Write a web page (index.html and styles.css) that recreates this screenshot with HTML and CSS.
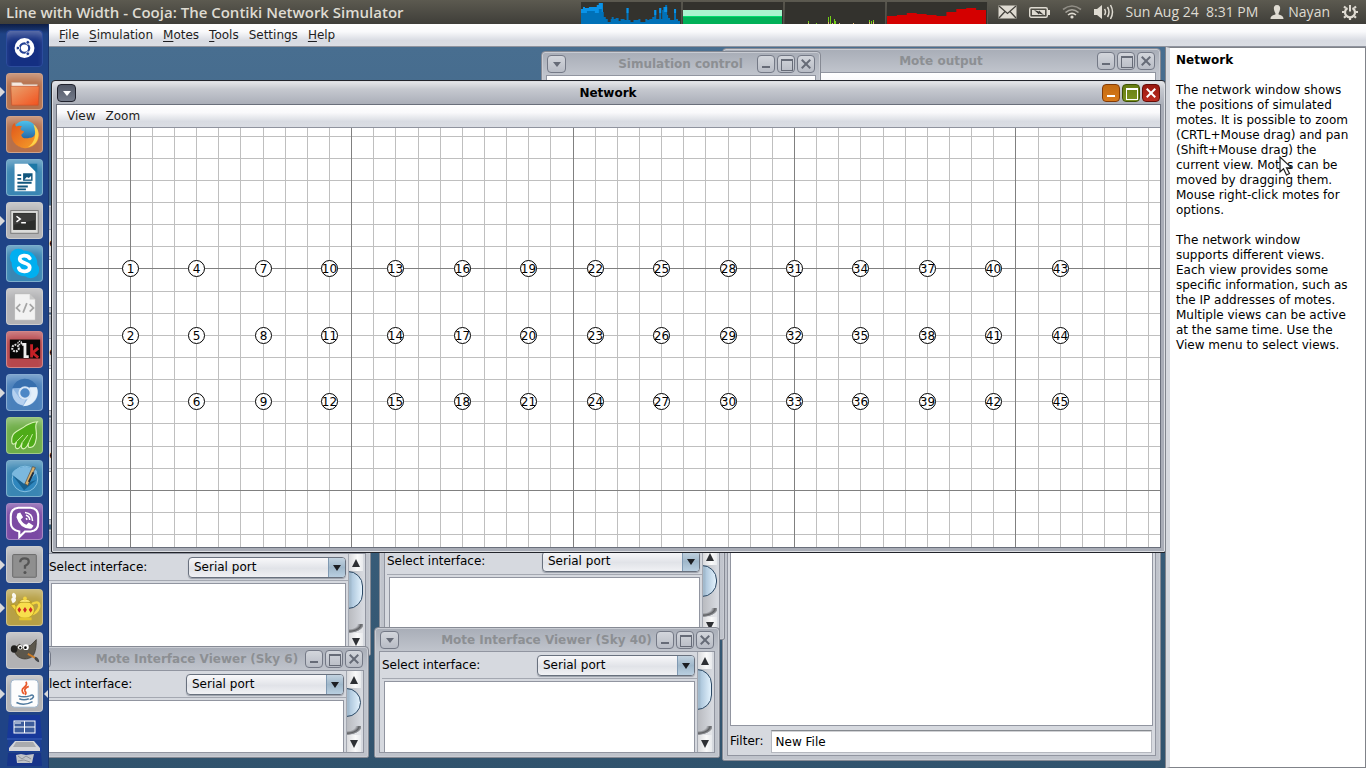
FILE: index.html
```html
<!DOCTYPE html>
<html lang="en">
<head>
<meta charset="utf-8">
<title>Line with Width - Cooja: The Contiki Network Simulator</title>
<link rel="stylesheet" href="styles.css">
</head>
<body>
<header class="panel">
  <h1 class="panel-title">Line with Width - Cooja: The Contiki Network Simulator</h1>
  <div class="monitors">
    <svg class="monitor" width="101" height="22" viewBox="0 0 101 22" aria-label="Processor"><path fill="#0071b8" d="M0 22V7H2V5H4V6H8V5H16V3H18V1H22V10H23V15H25V17H27V20H30V17H31V15H33V17H35V16H38V19H40V17H44V18H46V6H48V18H50V20H53V18H58V17H60V20H65V17H67V18H69V17H72V15H74V8H76V17H79V6H81V17H82V8H83V5H85V3H87V13H88V16H90V18H94V7H96V17H98V19H100V22Z"/><path fill="#0a93e8" d="M0 11V7H2V5H4V6H8V5H16V3H18V1H22V10H21V7H18V11H14V9H6V11ZM46 6H48V11H46ZM74 8H76V13H74ZM79 6H81V11H79ZM84 5H87V10H84ZM94 7H96V11H94Z"/></svg>
    <svg class="monitor" width="101" height="22" viewBox="0 0 101 22" aria-label="Memory"><path fill="#a9f4cf" d="M0 8H100V14H0Z"/><path fill="#00b058" d="M0 14H100V22H0Z"/><path fill="#00dc6e" d="M0 14H100V15H0Z"/></svg>
    <svg class="monitor" width="101" height="22" viewBox="0 0 101 22" shape-rendering="crispEdges" aria-label="Network traffic"><path fill="#73d216" d="M23 19H24V22H23ZM31 21H32V22H31ZM43 15H44V22H43ZM45 14H46V22H45ZM49 17H50V22H49ZM51 19H52V22H51ZM85 18H86V22H85ZM87 19H88V22H87ZM89 18H90V22H89Z"/><path fill="#e9b96e" d="M23 21H24V22H23ZM43 20H44V22H43ZM47 21H48V22H47ZM55 21H56V22H55ZM69 21H70V22H69ZM85 20H86V22H85ZM89 20H90V22H89Z"/></svg>
    <svg class="monitor" width="101" height="22" viewBox="0 0 101 22" aria-label="Load"><path fill="#d40000" d="M0 22V14H10V13H20V11H30V12H40V13H50V14H60V10H70V7H80V6H90V8H100V22Z"/></svg>
  </div>
  <div class="indicators">
    <button class="indicator" aria-label="Mail"><svg width="19" height="14" viewBox="0 0 19 14"><rect x="0.5" y="0.5" width="18" height="13" fill="#dfdbd2"/><path d="M1 1L9.500 8.500L18 1M1 13L7 6.500M18 13L12 6.500" stroke="#45433d" fill="none" stroke-width="1.300"/></svg></button>
    <button class="indicator" aria-label="Battery"><svg width="21" height="13" viewBox="0 0 21 13"><rect x="0.700" y="1.700" width="17.600" height="9.600" rx="1.500" fill="none" stroke="#dfdbd2" stroke-width="1.400"/><rect x="3" y="4" width="13" height="5" fill="#dfdbd2"/><rect x="19" y="4" width="2" height="5" fill="#dfdbd2"/><path d="M5 4L10 5.500V4.500L15 9L10 7.500V8.500Z" fill="#3c3b37"/></svg></button>
    <button class="indicator" aria-label="Wireless network"><svg width="20" height="14" viewBox="0 0 20 14" fill="none" stroke-width="1.600"><path d="M1 4.500Q10-2.500 19 4.500" stroke="#918e86"/><path d="M3.500 7.500Q10 2 16.500 7.500" stroke="#a9a69e"/><path d="M6 10Q10 6.800 14 10" stroke="#dfdbd2"/><circle cx="10" cy="12" r="1.600" fill="#dfdbd2"/></svg></button>
    <button class="indicator" aria-label="Sound"><svg width="20" height="16" viewBox="0 0 20 16" fill="none" stroke="#dfdbd2" stroke-width="1.500"><path d="M0 5H3L8 1V15L3 11H0Z" fill="#dfdbd2" stroke="none"/><path d="M10.500 5Q12.500 8 10.500 11M13.500 3Q16.500 8 13.500 13M16.500 1Q20.500 8 16.500 15"/></svg></button>
    <button class="indicator">Sun Aug 24&nbsp; 8:31 PM</button>
    <button class="indicator user"><svg width="14" height="14" viewBox="0 0 14 14"><path fill="#dfdbd2" d="M7 0C9.500 0 10.400 1.700 10.100 4C9.900 6 9 7.300 8.600 8.200V9.500C10.500 10.300 13.500 10.400 13.500 14H.5C.5 10.400 3.500 10.300 5.400 9.500V8.200C5 7.300 4.100 6 3.900 4C3.600 1.700 4.500 0 7 0Z"/></svg>Nayan</button>
    <button class="indicator" aria-label="Session"><svg width="16" height="16" viewBox="0 0 16 16" fill="none" stroke="#dfdbd2"><path d="M5.500 4A5 5 0 1 0 10.500 4" stroke-width="2.200"/><path d="M8 1V7.500" stroke-width="2"/><path d="M0 8H2M14 8H16M8 14V16M2 13.800L3.700 12.200M14 13.800L12.300 12.200M2 2.500L3.700 4M14 2.500L12.300 4" stroke-width="2.200"/></svg></button>
  </div>
</header>

<div class="workspace">
  <nav class="launcher" aria-label="Launcher">
    <button class="tile tile-dash" aria-label="Dash home"><svg viewBox="0 0 37 37"><circle cx="18.500" cy="18" r="10.500" fill="#fff"/><circle cx="18.500" cy="18" r="5" fill="none" stroke="#213f93" stroke-width="2.300"/><g fill="#213f93" stroke="#fff"><circle cx="11.500" cy="18" r="2"/><circle cx="22" cy="12" r="2"/><circle cx="22" cy="24" r="2"/></g></svg></button>
    <button class="tile tile-orange running" aria-label="Files"><svg viewBox="0 0 37 37"><path d="M5 9H15L17 11H32V14H5Z" fill="#f6e9df" stroke="#c8b1a2" stroke-width=".7"/><path d="M4 13H34L33 33H5Z" fill="url(#gFolder)" stroke="#c7512a" stroke-width=".7"/></svg></button>
    <button class="tile tile-orange" aria-label="Firefox"><svg viewBox="0 0 37 37"><circle cx="19" cy="18" r="14" fill="url(#gGlobe)"/><path d="M19 33A15 15 0 0 1 5 14C5 10 6 8 8 6C8 8 9 9 10 10C12 9 14 9 16 10C14 11 14 13 15 14L18 15C18 17 16 17 15 19C16 23 20 23 24 22C29 22 31 17 30 11C33 14 34 17 34 19C33 28 27 33 19 33Z" fill="url(#gFox)"/><path d="M28 8C32 11 34 15 33 21C32 28 27 31 22 32C29 28 32 19 28 8Z" fill="#fcd24a"/></svg></button>
    <button class="tile tile-blue" aria-label="Writer"><svg viewBox="0 0 37 37"><path d="M8 4H22L30 12V33H8Z" fill="#fff"/><path d="M22 4H32V14Z" fill="#1e78a6"/><path d="M11 16H15M11 20H15M11 24H26M11 28H22M11 31H20" stroke="#12577e" stroke-width="2"/><path d="M17 14H27V22H17Z" fill="#12577e"/><path d="M18.500 20.500L21 18L23 19L25.500 17V20.500Z" fill="#fff"/></svg></button>
    <button class="tile tile-grey running" aria-label="Terminal"><svg viewBox="0 0 37 37"><rect x="4" y="8" width="29" height="24" fill="#dcdcda" stroke="#767676"/><rect x="6.500" y="10.500" width="24" height="18" fill="#2c2d2b"/><path d="M7 11H30V18L7 23Z" fill="#444" opacity=".7"/><path d="M10 14L14 17L10 20M15 21H20" fill="none" stroke="#fff" stroke-width="1.600"/></svg></button>
    <button class="tile tile-blue" aria-label="Skype"><svg viewBox="0 0 37 37"><circle cx="12" cy="12" r="9" fill="#00aff0"/><circle cx="25" cy="25" r="9" fill="#00aff0"/><circle cx="18.500" cy="18.500" r="13.500" fill="#00aff0"/><path d="M24 13C22 9 13 9 13.500 14C14 19 24 17 24 22.500C24 28 14 28 12.500 23.500" fill="none" stroke="#fff" stroke-width="4" stroke-linecap="round"/></svg></button>
    <button class="tile tile-grey" aria-label="Source editor"><svg viewBox="0 0 37 37"><path d="M8 5H24L30 11V33H8Z" fill="#f2f2f2" stroke="#aaa" stroke-width=".6"/><path d="M24 5V11H30Z" fill="#c9c9c9"/><path d="M14 16L10 20L14 24M24 16L28 20L24 24M21 15L17 25" fill="none" stroke="#a5a5a5" stroke-width="1.800"/></svg></button>
    <button class="tile tile-red" aria-label="Luckybackup"><svg viewBox="0 0 37 37"><rect x="3" y="8" width="32" height="20" fill="#060606"/><circle cx="9" cy="17" r="3.500" fill="none" stroke="#ddd" stroke-width="2.200" stroke-dasharray="2 1"/><circle cx="13.500" cy="11.500" r="1.800" fill="none" stroke="#ddd" stroke-width="1.500" stroke-dasharray="1.500 .7"/><path d="M16 13H19V26H23" fill="none" stroke="#eee" stroke-width="3"/><path d="M26 13V27M33 17L27 22L33 27" fill="none" stroke="#c62026" stroke-width="3"/></svg></button>
    <button class="tile tile-sky running" aria-label="Chromium"><svg viewBox="0 0 37 37"><circle cx="19" cy="19" r="13.500" fill="#8fb6e2"/><path d="M5.500 14A14 14 0 0 1 32 13Z" fill="#376fae"/><path d="M17 33L24 22L24 13H31.500C35 22 28 33 17 33Z" fill="#e3effa"/><path d="M6 14L13 24Q16 27 20 25L17 32C9 31 4 23 6 14Z" fill="#b5d0ef"/><circle cx="19" cy="19" r="6" fill="#4c87c6" stroke="#d5e5f6" stroke-width="2"/></svg></button>
    <button class="tile tile-green" aria-label="Midori"><svg viewBox="0 0 37 37"><path d="M32 4C29 7 31 11 31 16C32 24 29 31 25 31C22 32 22 29 23 26C21 31 18 34 16 32C14 31 16 28 16 26C14 32 11 34 9 31C8 29 10 27 10 25C8 29 5 28 5 25C4 14 14 13 20 8C24 6 27 4 32 4Z" fill="#4eab18" stroke="#d9f3b8" stroke-width="1.200"/><path d="M10 25L17 18M16 26L22 18M23 26L27 17" stroke="#d0efab" fill="none"/></svg></button>
    <button class="tile tile-blue" aria-label="Scribes"><svg viewBox="0 0 37 37"><circle cx="19" cy="19" r="13.500" fill="#2f86bd" stroke="#8ac3e3"/><path d="M5 14L18 26L32 12C31 5 8 3 5 14Z" fill="#7bb8de"/><path d="M6 15L18 24L31 20L18 31Z" fill="#17608f"/><path d="M19 24L27 6L30 7L22 26Z" fill="#d8b06d" stroke="#4f463b" stroke-width=".7"/><path d="M23 22L28 12" stroke="#1e2c3b" stroke-width="2"/></svg></button>
    <button class="tile tile-purple" aria-label="Viber"><svg viewBox="0 0 37 37"><path d="M12 4H25Q33 5 33 13V20Q33 28 25 29H19L13 35V29Q4 27 4 20V13Q4 5 12 4Z" fill="#7d4ba3" stroke="#fff" stroke-width="2.200"/><path d="M11 10L14 9L17 14L14.500 16.500Q17 21 20.500 22L23 19.500L28 23L26 26Q14 27 10 14Z" fill="#fff"/><path d="M19 9Q27 10 27 18M20 12Q24 13 24 17M20 15L21.500 16.500" fill="none" stroke="#fff" stroke-width="1.600"/></svg></button>
    <button class="tile tile-grey running" aria-label="Unknown application"><svg viewBox="0 0 37 37"><rect x="6" y="8" width="25" height="24" rx="1" fill="#8f8f8f" stroke="#696969"/><path d="M14 16Q14 12 18.500 12Q23 12 23 15.500Q23 18 19 20V23" fill="none" stroke="#555" stroke-width="2.400"/><circle cx="19" cy="27" r="1.600" fill="#555"/></svg></button>
    <button class="tile tile-gold running" aria-label="Teapot"><svg viewBox="0 0 37 37"><path d="M26 15Q35 10 34 18Q32 25 25 26" fill="none" stroke="#f3d541" stroke-width="2.600"/><path d="M4 16L8 15L12 21V26Z" fill="#f3d541" stroke="#a98b16" stroke-width=".6"/><ellipse cx="19" cy="21" rx="10" ry="9" fill="#f8df4c" stroke="#a98b16" stroke-width=".7"/><path d="M12 13Q19 6 26 13Z" fill="#ffeb78" stroke="#a98b16" stroke-width=".7"/><circle cx="19" cy="9" r="2" fill="#f3d541"/><path d="M13 18L15 21L13 24L11 21ZM19 18L21 21L19 24L17 21ZM25 18L27 21L25 24L23 21Z" fill="#cf2b23"/><path d="M6 14Q3 9 6 8Q4 4 7 3Q11 5 9 9Q11 12 6 14Z" fill="#fff" opacity=".9"/><path d="M13 29H26V32H13Z" fill="#e5c52e"/></svg></button>
    <button class="tile tile-grey" aria-label="GIMP"><svg viewBox="0 0 37 37"><path d="M7 17L13 12L18 15L25 13L31 7C31 15 30 24 25 26C19 29 12 27 9 22Z" fill="#5c574c" stroke="#302d27" stroke-width=".7"/><ellipse cx="7.500" cy="17" rx="3.500" ry="4" fill="#201f1d"/><circle cx="14" cy="15" r="2.400" fill="#fff"/><circle cx="20" cy="15" r="3" fill="#fff"/><circle cx="14" cy="15.500" r="1.200"/><circle cx="19.500" cy="15.500" r="1.400"/><path d="M22 22L31 27" stroke="#cf7d26" stroke-width="2"/><path d="M30 25Q34 26 34 31Q30 30 29 27Z" fill="#44474a"/></svg></button>
    <button class="tile tile-grey running active" aria-label="Cooja"><svg viewBox="0 0 37 37"><rect x="4" y="4" width="29" height="29" rx="4" fill="#fdfdfd" stroke="#9db4cb"/><path d="M20 6Q22 9 18 12Q14 15 18 19M23 11Q18 13 19 16Q21 18 19 20" fill="none" stroke="#e8592b" stroke-width="1.800"/><path d="M12 21Q18 23 24 21M13 24Q18 26 23 24M10 28Q18 32 27 27M24 21Q28 19 28 22Q27 24 24 25" fill="none" stroke="#4f7a9f" stroke-width="1.600"/></svg></button>
    <button class="fold fold-switch" aria-label="Workspace switcher"><svg viewBox="0 0 37 25"><path d="M3 0H34L36 25H1Z" fill="#17389a"/><path d="M1 24H36" stroke="#3c62b8"/><rect x="8" y="6" width="21" height="12" fill="#3d5c9b" stroke="#fff"/><path d="M18.500 6V18M8 12H29M9 8H15" stroke="#fff" fill="none"/></svg></button>
    <button class="fold" aria-label="Volume"><svg viewBox="0 0 37 13"><path d="M2 0H35L36 12H1Z" fill="#1c3f93"/><path d="M9 1H28L34 8V11H3V8Z" fill="#d5d6d8"/><path d="M10 2H27L30 7H7Z" fill="#a9abae"/></svg></button>
    <button class="fold" aria-label="Trash"><svg viewBox="0 0 37 13"><path d="M2 0H35L36 13H1Z" fill="#17348a"/><path d="M10 2L15 1L20 2L28 1L26 10H11Z" fill="#c0c3c8"/><path d="M12 3L16 6L20 3L25 6M12 8L18 7L24 9" stroke="#8f939a" fill="none"/></svg></button>
  </nav>

  <main class="app">
    <nav class="menubar" aria-label="Application menu">
      <button class="menu"><u>F</u>ile</button>
      <button class="menu"><u>S</u>imulation</button>
      <button class="menu"><u>M</u>otes</button>
      <button class="menu"><u>T</u>ools</button>
      <button class="menu">Settings</button>
      <button class="menu"><u>H</u>elp</button>
    </nav>
    <div class="split">
      <div class="desktop">
        <section class="frame viewer at-edge-1"><div class="titlebar"></div><div class="pane"><div class="viewer-main"><div class="field"><span>Select interface:</span></div><div class="output"></div></div></div></section>
        <section class="frame viewer at-edge-2"><div class="titlebar"></div><div class="pane"><div class="viewer-main"><div class="field"><span>Select interface:</span></div><div class="output"></div></div></div></section>
        <section class="frame viewer at-edge-3"><div class="titlebar"></div><div class="pane"><div class="viewer-main"><div class="field"><span>Select interface:</span></div><div class="output"></div></div></div></section>

        <section class="frame mote-output">
          <div class="titlebar"><span></span><h2>Mote output</h2><div class="controls"><button class="ctl min" aria-label="Minimize"></button><button class="ctl max" aria-label="Maximize"></button><button class="ctl close" aria-label="Close"></button></div></div>
          <div class="pane log">
            <div class="inner-menubar"></div>
            <div class="log-lines"></div>
            <div class="filter"><label for="filter">Filter:</label><input id="filter" type="text" value="New File"></div>
          </div>
        </section>

        <section class="frame sim-control">
          <div class="titlebar"><button class="ctl roll" aria-label="Window menu"></button><h2>Simulation control</h2><div class="controls"><button class="ctl min" aria-label="Minimize"></button><button class="ctl max" aria-label="Maximize"></button><button class="ctl close" aria-label="Close"></button></div></div>
          <div class="pane"><div class="inner-menubar"></div></div>
        </section>

        <section class="frame viewer at-left-back">
          <div class="titlebar"></div>
          <div class="pane">
            <div class="viewer-main">
              <div class="field"><label for="if1">Select interface:</label><span class="combo"><select id="if1"><option>Serial port</option></select></span></div>
              <div class="output"></div>
            </div>
            <div class="scroll"><button class="up" aria-label="Scroll up"></button><div class="track"><div class="thumb"></div></div><button class="down" aria-label="Scroll down"></button></div>
          </div>
        </section>
        <section class="frame viewer at-mid-back">
          <div class="titlebar"></div>
          <div class="pane">
            <div class="viewer-main">
              <div class="field"><label for="if2">Select interface:</label><span class="combo"><select id="if2"><option>Serial port</option></select></span></div>
              <div class="output"></div>
            </div>
            <div class="scroll"><button class="up" aria-label="Scroll up"></button><div class="track"><div class="thumb"></div></div><button class="down" aria-label="Scroll down"></button></div>
          </div>
        </section>
        <section class="frame viewer at-left">
          <div class="titlebar"><button class="ctl roll" aria-label="Window menu"></button><h2>Mote Interface Viewer (Sky 6)</h2><div class="controls"><button class="ctl min" aria-label="Minimize"></button><button class="ctl max" aria-label="Maximize"></button><button class="ctl close" aria-label="Close"></button></div></div>
          <div class="pane">
            <div class="viewer-main">
              <div class="field"><label for="if3">Select interface:</label><span class="combo"><select id="if3"><option>Serial port</option></select></span></div>
              <div class="output"></div>
            </div>
            <div class="scroll"><button class="up" aria-label="Scroll up"></button><div class="track"><div class="thumb"></div></div><button class="down" aria-label="Scroll down"></button></div>
          </div>
        </section>
        <section class="frame viewer at-mid">
          <div class="titlebar"><button class="ctl roll" aria-label="Window menu"></button><h2>Mote Interface Viewer (Sky 40)</h2><div class="controls"><button class="ctl min" aria-label="Minimize"></button><button class="ctl max" aria-label="Maximize"></button><button class="ctl close" aria-label="Close"></button></div></div>
          <div class="pane">
            <div class="viewer-main">
              <div class="field"><label for="if4">Select interface:</label><span class="combo"><select id="if4"><option>Serial port</option></select></span></div>
              <div class="output"></div>
            </div>
            <div class="scroll"><button class="up" aria-label="Scroll up"></button><div class="track"><div class="thumb"></div></div><button class="down" aria-label="Scroll down"></button></div>
          </div>
        </section>

        <section class="frame network focused">
          <div class="titlebar"><button class="ctl roll" aria-label="Window menu"></button><h2>Network</h2><div class="controls"><button class="ctl min" aria-label="Minimize"></button><button class="ctl max" aria-label="Maximize"></button><button class="ctl close" aria-label="Close"></button></div></div>
          <div class="pane network-pane">
            <div class="inner-menubar"><button class="menu">View</button><button class="menu">Zoom</button></div>
            <svg class="plot" id="plot" role="img" aria-label="Mote positions"></svg>
          </div>
        </section>
      </div>

      <aside class="help">
        <h2>Network</h2>
        <p>The network window shows the positions of simulated motes. It is possible to zoom (CRTL+Mouse drag) and pan (Shift+Mouse drag) the current view. Motes can be moved by dragging them. Mouse right-click motes for options.</p>
        <p>The network window supports different views. Each view provides some specific information, such as the IP addresses of motes. Multiple views can be active at the same time. Use the View menu to select views.</p>
        <svg class="pointer" width="14" height="20" viewBox="0 0 14 20"><path d="M1 1V16L4.500 12.800L7.500 19L10.500 17.500L7.500 11.800H12.500Z" fill="#fff" stroke="#222" stroke-width="1.200"/></svg>
      </aside>
    </div>
  </main>
</div>

<svg class="defs" width="0" height="0" aria-hidden="true">
  <defs>
    <linearGradient id="gFolder" x1="0" y1="0" x2="1" y2="1"><stop offset="0" stop-color="#e9a36f"/><stop offset="1" stop-color="#f2511d"/></linearGradient>
    <linearGradient id="gGlobe" x1="0" y1="0" x2="0" y2="1"><stop offset="0" stop-color="#4cc1ec"/><stop offset="1" stop-color="#123b85"/></linearGradient>
    <linearGradient id="gFox" x1="0" y1="0" x2="1" y2="1"><stop offset="0" stop-color="#e0561c"/><stop offset="1" stop-color="#f6a32a"/></linearGradient>
  </defs>
</svg>
<script src="plot.js"></script>
</body>
</html>
```
FILE: styles.css
```css
* { box-sizing: border-box; }
body {
  margin: 0;
  height: 100vh;
  display: flex;
  flex-direction: column;
  overflow: hidden;
  font: 12px/15px "DejaVu Sans", sans-serif;
  color: #000;
}
h1, h2, p { margin: 0; font-size: inherit; }
button, input, select { font: inherit; color: inherit; margin: 0; padding: 0; border: 0; background: none; }
.defs { position: absolute; }

/* top panel */
.panel {
  flex: none;
  height: 24px;
  display: flex;
  align-items: center;
  padding: 0 8px 0 6px;
  background: linear-gradient(#5c5a50, #3f3e39);
  color: #dfdbd2;
  font: 14px/24px "Open Sans", sans-serif;
}
.panel-title { font-size: 15px; font-weight: 600; flex: 1; white-space: nowrap; }
.monitors { display: flex; gap: 1px; align-self: stretch; align-items: flex-end; }
.monitor { background: #33322d; border-right: 1px solid #55534b; height: 22px; }
.indicators { display: flex; align-items: center; gap: 12px; margin-left: 10px; }
.indicator { display: flex; align-items: center; white-space: nowrap; }
.user { gap: 4px; }

.workspace { flex: 1; display: flex; min-height: 0; }

/* launcher */
.launcher {
  flex: none;
  width: 49px;
  display: flex;
  flex-direction: column;
  align-items: center;
  gap: 6px;
  padding: 6px 0 0 1px;
  overflow: hidden;
  background: linear-gradient(#0d1d45, #1f4386 10px, #1f4386);
  border-right: 1px solid #19356d;
}
.tile {
  flex: none;
  position: relative;
  width: 37px;
  height: 37px;
  border-radius: 4px;
  border: 1px solid rgba(255, 255, 255, .35);
  box-shadow: inset 0 8px 8px -4px rgba(255, 255, 255, .35);
}
.tile svg { display: block; width: 35px; height: 35px; }
.tile-dash { background: #142f82; border-color: #2c4c9c; }
.tile-orange { background: #b6704b; }
.tile-blue { background: #3a86b3; }
.tile-grey { background: #b2b2b4; }
.tile-red { background: #b7474c; }
.tile-sky { background: #4a80bb; }
.tile-green { background: #6fae48; }
.tile-purple { background: #7a49a3; }
.tile-gold { background: #b7a045; }
.running::before {
  content: "";
  position: absolute;
  left: -7px;
  top: 13px;
  border: 5px solid transparent;
  border-left-color: #d8d8da;
  border-right-width: 0;
}
.active::after {
  content: "";
  position: absolute;
  right: -7px;
  top: 13px;
  border: 5px solid transparent;
  border-right-color: #d8d8da;
  border-left-width: 0;
}
.fold { flex: none; width: 37px; height: 13px; margin-top: -6px; }
.fold svg { display: block; width: 37px; }
.fold-switch { height: 25px; margin-top: -3px; }

/* application */
.app { flex: 1; min-width: 0; display: flex; flex-direction: column; }
.menubar, .inner-menubar {
  flex: none;
  display: flex;
  align-items: center;
  gap: 10px;
  padding: 0 10px;
  height: 23px;
  border-bottom: 1px solid #8f939e;
  background: linear-gradient(#fff, #f9f9fb 35%, #d8dbe2 75%, #dadde3);
  color: #1e1e22;
}
.menu { line-height: 15px; }
.menu u { text-underline-offset: 2px; }
.split { flex: 1; min-height: 0; display: flex; }
.desktop {
  flex: 1;
  position: relative;
  overflow: hidden;
  background: linear-gradient(#486e90, #3c617f 50%, #31536d);
}
.help {
  position: relative;
  flex: none;
  width: 200px;
  padding: 5px 14px 0 6px;
  background: #fff;
  border: 1px solid #808389;
  border-left: 4px solid #d6d9df;
  box-shadow: -1px 0 #80848c;
}
.help p { margin-top: 15px; }
.pointer { position: absolute; left: 109px; top: 108px; }

/* internal frames */
.frame {
  position: absolute;
  display: flex;
  flex-direction: column;
  padding: 0 4px 4px;
  border: 1px solid #868a94;
  border-radius: 4px 4px 2px 2px;
  background: linear-gradient(#a8adb7, #c1c5cd 24px, #bfc3cb);
  box-shadow: inset 0 0 0 1px #c9ccd3;
}
.titlebar {
  flex: none;
  height: 23px;
  padding: 1px 1px 0 0;
  display: grid;
  grid-template-columns: minmax(0, 1fr) auto minmax(0, 1fr);
  align-items: center;
  color: #8c8f93;
  white-space: nowrap;
}
.titlebar h2 { font-weight: 700; }
.controls { display: flex; gap: 2px; justify-content: flex-end; }
.ctl {
  position: relative;
  width: 18px;
  height: 18px;
  border: 1px solid #747986;
  border-radius: 4px;
  background: linear-gradient(#d3d6dc, #b8bcc5);
  color: #666b77;
}
.ctl::before, .ctl::after { content: ""; position: absolute; }
.roll { margin-left: 1px; width: 19px; }
.roll::before { left: 5px; top: 6px; border: 4px solid transparent; border-top: 5px solid currentColor; border-bottom: 0; }
.min::before { left: 4px; top: 10px; width: 8px; height: 2px; background: currentColor; }
.max::before { left: 3px; top: 3px; width: 10px; height: 9px; border: 1px solid currentColor; border-top-width: 2px; }
.close::before, .close::after { left: 2px; top: 7px; width: 12px; height: 2px; background: currentColor; transform: rotate(45deg); }
.close::after { transform: rotate(-45deg); }

.pane { flex: 1; min-height: 0; display: flex; border: 1px solid #9195a0; background: #d6d9df; }
.focused { border-color: #22242b; background: linear-gradient(#e8e9ec, #c6c9d0 8px, #a9adb7 24px, #a9adb7); box-shadow: inset 0 0 0 1px #dcdee2; }
.focused .titlebar { color: #000; }
.focused .pane { border-color: #6a6f7b; }
.focused .ctl { color: #fff; }
.focused .roll { background: linear-gradient(#535968, #747b8a); border-color: #20222d; }
.focused .min { background: linear-gradient(#c36a10, #d97a1a); border-color: #843b05; }
.focused .max { background: linear-gradient(#657c12, #7b9220); border-color: #3f5205; }
.focused .close { background: linear-gradient(#98180f, #bd2c20); border-color: #690c08; }

.viewer { width: 346px; }
.viewer-main { flex: 1; display: flex; flex-direction: column; padding-left: 2px; }
.field { flex: none; height: 27px; display: flex; align-items: center; justify-content: space-between; padding: 0 2px 0 0; border-bottom: 1px solid #a4a8b1; }
.output { flex: 1; margin: 2px 2px 0 2px; background: #fff; border: 1px solid #9195a0; border-bottom: 0; }
.combo { position: relative; display: block; width: 158px; height: 21px; }
.combo select {
  appearance: none;
  width: 100%;
  height: 100%;
  padding: 0 22px 0 5px;
  border: 1px solid #69717e;
  border-radius: 4px;
  background: linear-gradient(#f8f8fa, #e1e3e8 55%, #f0f1f4);
  box-shadow: 0 1px 1px #9a9fa9;
}
.combo::after {
  content: "";
  position: absolute;
  top: 1px;
  right: 1px;
  bottom: 1px;
  width: 16px;
  border-left: 1px solid #7f99b2;
  border-radius: 0 3px 3px 0;
  background: linear-gradient(#c3d3e0, #9fb7ca 50%, #b9cfe0);
  pointer-events: none;
}
.combo::before {
  content: "";
  position: absolute;
  z-index: 1;
  right: 5px;
  top: 8px;
  border: 4px solid transparent;
  border-top: 6px solid #1c1e22;
  border-bottom: 0;
  pointer-events: none;
}
.scroll { flex: none; width: 17px; padding-right: 2px; display: flex; flex-direction: column; border-left: 1px solid #a4a8b1; }
.up, .down { position: relative; flex: none; height: 17px; background: linear-gradient(90deg, #d9dadd, #fafafa 60%, #e8eaed); }
.up::before, .down::before { content: ""; position: absolute; left: 3px; top: 5px; border: 4px solid transparent; }
.up::before { border-bottom: 8px solid #2e3034; border-top: 0; }
.down::before { border-top: 8px solid #2e3034; border-bottom: 0; }
.track { flex: 1; position: relative; overflow: hidden; background: linear-gradient(90deg, #b9bbc0, #d6d9df); }
.track::after { content: ""; position: absolute; left: 0; right: 0; bottom: 0; height: 9px; background: radial-gradient(ellipse 15px 9px at 0 0, transparent 55%, #4a4b4e 80%, #8d8f93 95%, #e6e7ea 100%); opacity: .85; }
.thumb {
  position: absolute;
  left: -16px;
  right: 0;
  top: 0;
  height: 62%;
  border: 1px solid #2b4864;
  border-radius: 15px;
  background: linear-gradient(90deg, #a2bacd 60%, #b0c9de 65%, #e3f2fd);
}

.log { flex-direction: column; padding: 0 2px 2px 2px; }
.log .inner-menubar { margin: 0 -2px; }
.log-lines { flex: 1; background: #fff; border: 1px solid #9195a0; }
.filter { flex: none; display: flex; align-items: center; gap: 7px; padding: 4px 1px 0 0; }
.filter input { flex: 1; min-width: 0; height: 23px; padding: 0 4px; background: #fff; border: 1px solid #b5b8bf; border-top-color: #85898f; box-shadow: inset 0 1px #d0d1d4; }
.sim-control .inner-menubar { flex: 1; }

.network-pane { flex-direction: column; }
.plot { flex: 1; min-height: 0; width: 100%; background: #fff; display: block; }
.plot text { font: 12px "DejaVu Sans", sans-serif; text-anchor: middle; }
.plot circle { fill: #fff; stroke: #000; }
.plot .minor { stroke: #bfbfbf; }
.plot .major { stroke: #808080; }

/* window places on the desktop */
.network { left: 2px; top: 33px; width: 1115px; height: 473px; }
.mote-output { left: 673px; top: 1px; width: 439px; height: 713px; }
.sim-control { left: 492px; top: 4px; width: 280px; height: 120px; }
.at-left-back { left: -8px; top: 482px; width: 330px; height: 127px; }
.at-mid-back { left: 330px; top: 476px; height: 117px; }
.at-left { left: -23px; top: 599px; width: 343px; height: 112px; }
.at-mid { left: 325px; top: 580px; height: 131px; }
.at-edge-1 { left: -26px; top: 158px; height: 108px; }
.at-edge-2 { left: -26px; top: 267px; height: 102px; }
.at-edge-3 { left: -26px; top: 370px; height: 108px; }
```
FILE: plot.js
```js
const svg = document.getElementById("plot");
const NS = "http://www.w3.org/2000/svg";
const step = 22.143;
const origin = { x: 73, y: 140 };

function add(tag, attrs, text) {
  const el = document.createElementNS(NS, tag);
  for (const key in attrs) el.setAttribute(key, attrs[key]);
  if (text !== undefined) el.textContent = text;
  svg.appendChild(el);
}

// background grid: every tenth line is darker
["minor", "major"].forEach(kind => {
  for (let i = -10; i < 120; i++) {
    if ((i % 10 === 0) !== (kind === "major")) continue;
    const x = Math.floor(origin.x + i * step + 0.2) + 0.5;
    const y = Math.floor(origin.y + i * step + 0.87) + 0.5;
    add("line", { x1: x, x2: x, y1: 0, y2: "100%", class: kind });
    add("line", { x1: 0, x2: "100%", y1: y, y2: y, class: kind });
  }
});

// motes, three to a column
for (let id = 1; id <= 45; id++) {
  const x = Math.floor(origin.x + Math.floor((id - 1) / 3) * 3 * step + 0.2) + 0.5;
  const y = Math.floor(origin.y + ((id - 1) % 3) * 3 * step + 0.6) + 0.5;
  add("circle", { cx: x, cy: y, r: 8 });
  add("text", { x: x, y: y + 4 }, id);
}
```
